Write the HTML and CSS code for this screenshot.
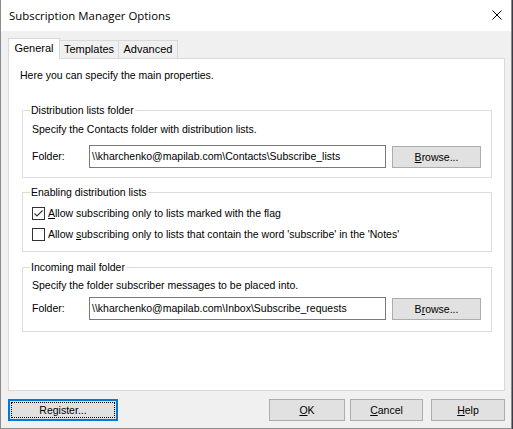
FILE: index.html
```html
<!DOCTYPE html>
<html>
<head>
<meta charset="utf-8">
<link rel="stylesheet" href="styles.css">
</head>
<body>
<div class="window">
  <div class="titlebar">
    <span class="title">Subscription Manager Options</span>
    <svg class="close" width="10" height="10" viewBox="0 0 10 10"><path d="M0.5 0.5 L9.5 9.5 M9.5 0.5 L0.5 9.5" stroke="#000" stroke-width="1" fill="none"/></svg>
  </div>
  <div class="content">
    <div class="tabs">
      <div class="tab active">General</div>
      <div class="tab">Templates</div>
      <div class="tab">Advanced</div>
    </div>
    <div class="panel">
      <div class="intro">Here you can specify the main properties.</div>

      <fieldset class="group g1">
        <legend>Distribution lists folder</legend>
        <div class="line">Specify the Contacts folder with distribution lists.</div>
        <div class="folder-row">
          <span class="label">Folder:</span>
          <div class="input">\\kharchenko@mapilab.com\Contacts\Subscribe_lists</div>
          <div class="btn browse"><u>B</u>rowse...</div>
        </div>
      </fieldset>

      <fieldset class="group g2">
        <legend>Enabling distribution lists</legend>
        <div class="check-row">
          <span class="box"><svg width="11" height="11" viewBox="0 0 11 11"><path d="M1.5 5.5 L4 8 L9.5 2.5" stroke="#333" stroke-width="1.1" fill="none"/></svg></span>
          <span><u>A</u>llow subscribing only to lists marked with the flag</span>
        </div>
        <div class="check-row second">
          <span class="box"></span>
          <span>Allow <u>s</u>ubscribing only to lists that contain the word 'subscribe' in the 'Notes'</span>
        </div>
      </fieldset>

      <fieldset class="group g3">
        <legend>Incoming mail folder</legend>
        <div class="line">Specify the folder subscriber messages to be placed into.</div>
        <div class="folder-row">
          <span class="label">Folder:</span>
          <div class="input">\\kharchenko@mapilab.com\Inbox\Subscribe_requests</div>
          <div class="btn browse">B<u>r</u>owse...</div>
        </div>
      </fieldset>
    </div>
    <div class="footer">
      <div class="btn register"><span class="focus">Register...</span></div>
      <div class="spacer"></div>
      <div class="btn ok"><u>O</u>K</div>
      <div class="btn cancel"><u>C</u>ancel</div>
      <div class="btn help"><u>H</u>elp</div>
    </div>
  </div>
</div>
</body>
</html>
```

FILE: styles.css
```css
html, body {
  margin: 0;
  padding: 0;
}
body {
  width: 513px;
  height: 429px;
  background: #3a3a48;
  overflow: hidden;
  font-family: "Liberation Sans", Arial, sans-serif;
  font-size: 10.5px;
  line-height: 13px;
  color: #000;
}
.window {
  width: 510px;
  height: 428px;
  border: 1px solid #8c8c8c;
  border-top: none;
  background: #f0f0f0;
  display: flex;
  flex-direction: column;
}
.titlebar {
  height: 31px;
  background: #fff;
  display: flex;
  align-items: center;
  padding-left: 8px;
  flex-shrink: 0;
}
.title {
  font-family: "Open Sans", "Noto Sans", sans-serif;
  font-size: 11.4px;
  color: #000;
  flex: 1;
  margin-top: -1px;
}
.close {
  margin-right: 9px;
  margin-top: -1px;
}
.content {
  padding: 7px 6px 0 7px;
  display: flex;
  flex-direction: column;
}
.tabs {
  display: flex;
  align-items: flex-end;
  height: 20px;
  font-size: 11px;
}
.tab {
  height: 17px;
  line-height: 17px;
  border: 1px solid #d9d9d9;
  border-bottom: none;
  border-left: none;
  background: #f0f0f0;
  text-align: center;
  width: 58px;
}
.tab.active {
  height: 20px;
  line-height: 18px;
  width: 50px;
  border-left: 1px solid #d9d9d9;
  background: #fff;
  margin-bottom: -1px;
  position: relative;
  z-index: 1;
}
.panel {
  border: 1px solid #d9d9d9;
  background: #fff;
  padding: 10px 12px 0 13px;
  box-sizing: border-box;
  height: 333px;
}
.intro {
  margin-left: -2px;
}
.group {
  margin: 0;
  border: 1px solid #dcdcdc;
  padding: 0 9px;
  min-width: 0;
}
.group legend {
  padding: 0 1px;
  margin-left: -2px;
  line-height: 13px;
}
.g1 {
  margin-top: 22px;
  padding-top: 6px;
  padding-bottom: 9px;
}
.g1 .folder-row {
  margin-top: 9px;
}
.g2 {
  margin-top: 8px;
  padding-top: 8px;
  padding-bottom: 10px;
}
.g3 {
  margin-top: 9px;
  padding-top: 5px;
  padding-bottom: 11px;
}
.g3 .folder-row {
  margin-top: 5px;
}
.folder-row {
  display: flex;
  align-items: center;
  height: 23px;
}
.label {
  width: 57px;
}
.input {
  width: 293px;
  height: 21px;
  border: 1px solid #7a7a7a;
  padding-left: 2px;
  line-height: 20px;
  white-space: nowrap;
  overflow: hidden;
}
.btn {
  box-sizing: border-box;
  height: 22px;
  border: 1px solid #adadad;
  background: #e1e1e1;
  display: flex;
  align-items: center;
  justify-content: center;
}
.browse {
  width: 89px;
  margin-left: 6px;
  margin-top: 1px;
}
.check-row {
  display: flex;
  align-items: center;
  height: 13px;
}
.check-row.second {
  margin-top: 8px;
}
.box {
  width: 11px;
  height: 11px;
  border: 1px solid #333;
  background: #fff;
  margin-right: 3px;
  display: flex;
}
.footer {
  display: flex;
  margin-top: 8px;
  height: 22px;
}
.register {
  width: 110px;
  border: 2px solid #0078d7;
  padding: 1px;
}
.register .focus {
  display: flex;
  align-items: center;
  justify-content: center;
  width: 100%;
  height: 100%;
  box-sizing: border-box;
  border: 1px dotted #000;
}
.spacer {
  flex: 1;
}
.ok {
  width: 76px;
}
.cancel {
  width: 73px;
  margin-left: 5px;
}
.help {
  width: 74px;
  margin-left: 8px;
}
```
